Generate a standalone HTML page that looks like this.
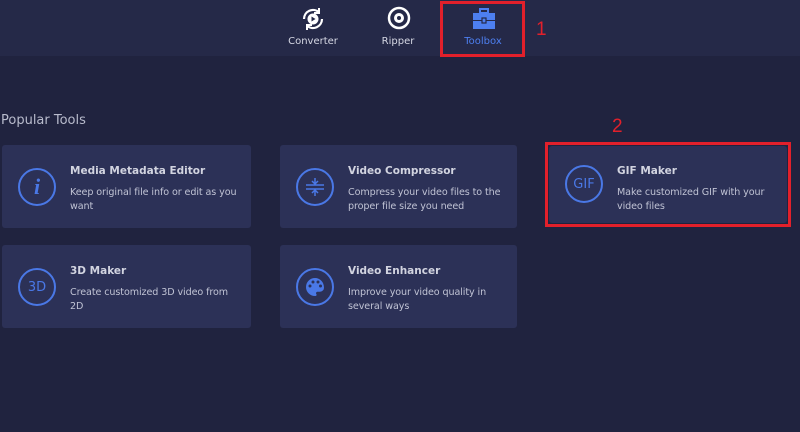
<!DOCTYPE html>
<html><head><style>
*{margin:0;padding:0;box-sizing:border-box}
body{width:800px;height:432px;background:#20233f;font-family:"DejaVu Sans","Liberation Sans",sans-serif;position:relative;overflow:hidden}
.hdr{position:absolute;left:0;top:0;width:800px;height:56px;background:#252948}
.tab{position:absolute;top:36px;font-size:10px;color:#d6d8e4;text-align:center;width:80px}
.red{position:absolute;border:3px solid #e2202b}
.num{position:absolute;color:#e2202b;font-family:"Liberation Sans",sans-serif;font-size:19px}
.pt{position:absolute;left:1px;top:113px;font-size:13px;color:#b8bbcc}
.card{position:absolute;background:#2c3157;border-radius:3px}
.ic{position:absolute;left:16px;top:23px;width:38px;height:38px;border:2px solid #4a78e6;border-radius:50%;color:#4a78e6;display:flex;align-items:center;justify-content:center;font-size:14px}
.t{position:absolute;left:68px;top:20px;font-size:10.5px;font-weight:bold;color:#d2d4e0}
.d{position:absolute;left:68px;top:41px;font-size:9.6px;color:#c0c3d4;line-height:14px;white-space:nowrap;letter-spacing:-0.1px}
</style></head><body>
<div class="hdr"></div>
<svg style="position:absolute;left:300px;top:6px" width="26" height="26" viewBox="0 0 26 26"><path d="M4 13a9 9 0 0 1 15-6.7M22 13a9 9 0 0 1-15 6.7" fill="none" stroke="#fff" stroke-width="2.2"/><path d="M19 2v5h-5M7 24v-5h5" fill="none" stroke="#fff" stroke-width="2"/><circle cx="13" cy="13" r="5.5" fill="#fff"/><path d="M11.5 10.5v5l4-2.5z" fill="#252948"/></svg>
<div class="tab" style="left:273px">Converter</div>
<svg style="position:absolute;left:387px;top:6px" width="24" height="24"><circle cx="12" cy="12" r="10" fill="none" stroke="#fff" stroke-width="2.5"/><circle cx="12" cy="12" r="5" fill="#fff"/><circle cx="12" cy="12" r="2" fill="#252948"/></svg>
<div class="tab" style="left:358px">Ripper</div>
<svg style="position:absolute;left:472px;top:8px" width="24" height="22"><rect x="8" y="1" width="8" height="4" fill="none" stroke="#4d7ff0" stroke-width="2"/><rect x="1" y="5" width="22" height="7" fill="#4d7ff0"/><rect x="1" y="13" width="22" height="8" fill="#4d7ff0"/><rect x="10" y="10" width="4" height="5" fill="#4d7ff0" stroke="#252948" stroke-width="1.2"/></svg>
<div class="tab" style="left:443px;color:#4d7ff0">Toolbox</div>
<div class="red" style="left:440px;top:1px;width:85px;height:56px"></div>
<div class="num" style="left:536px;top:19px">1</div>
<div class="pt">Popular Tools</div>
<div class="num" style="left:612px;top:116px">2</div>
<div class="card" style="left:2px;top:145px;width:249px;height:83px"><div class="ic" style="font-family:'Liberation Serif',serif;font-style:italic;font-size:22px;font-weight:bold">i</div><div class="t">Media Metadata Editor</div><div class="d">Keep original file info or edit as you<br>want</div></div>
<div class="card" style="left:280px;top:145px;width:237px;height:83px"><div class="ic"><svg width="22" height="20"><path d="M2 8h18M2 12h18M11 1v5M8 4l3 3 3-3M11 19v-5M8 16l3-3 3 3" fill="none" stroke="#4a78e6" stroke-width="1.5"/></svg></div><div class="t">Video Compressor</div><div class="d">Compress your video files to the<br>proper file size you need</div></div>
<div class="card" style="left:549px;top:146px;width:238px;height:77px"><div class="ic" style="top:19px;font-size:13px">GIF</div><div class="t" style="top:19px">GIF Maker</div><div class="d" style="top:40px">Make customized GIF with your<br>video files</div></div>
<div class="red" style="left:545px;top:142px;width:246px;height:85px"></div>
<div class="card" style="left:2px;top:245px;width:249px;height:83px"><div class="ic" style="font-size:13px">3D</div><div class="t">3D Maker</div><div class="d">Create customized 3D video from<br>2D</div></div>
<div class="card" style="left:280px;top:245px;width:237px;height:83px"><div class="ic"><svg width="20" height="20" viewBox="0 0 20 20"><path d="M10 1a9 9 0 0 0 0 18c1.5 0 2-1 1.3-2-.7-1 0-2.3 1.3-2.3H15a4 4 0 0 0 4-4C19 5 15 1 10 1z" fill="#4a78e6"/><circle cx="5" cy="9" r="1.5" fill="#2c3157"/><circle cx="8" cy="5" r="1.5" fill="#2c3157"/><circle cx="13" cy="5" r="1.5" fill="#2c3157"/><circle cx="15.5" cy="9" r="1.5" fill="#2c3157"/></svg></div><div class="t">Video Enhancer</div><div class="d">Improve your video quality in<br>several ways</div></div>
</body></html>
